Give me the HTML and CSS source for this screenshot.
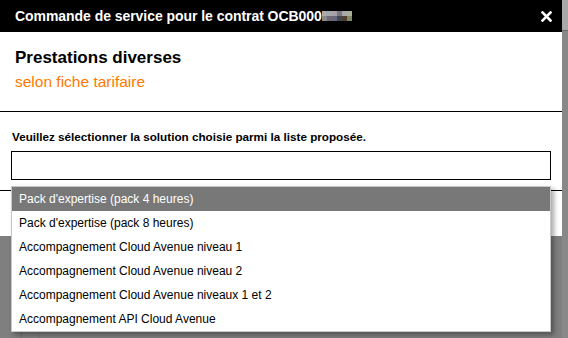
FILE: index.html
```html
<!DOCTYPE html>
<html lang="fr">
<head>
    <meta charset="UTF-8">
    <meta name="viewport" content="width=device-width, initial-scale=1.0">
    <title>Commande de service</title>
    <link rel="stylesheet" href="styles.css">
</head>
<body>
    <div class="page">
        <div class="column">
            <div class="modal">
                <div class="modal-header">
                    <span class="modal-title">Commande de service pour le contrat OCB000<span class="masked"><i style="background:#b0a8a8"></i><i style="background:#a0a8b0"></i><i style="background:#a8a0a8"></i><i style="background:#787880"></i><i style="background:#a8a8a8"></i><i style="background:#a8b098"></i><i style="background:#888888"></i><i style="background:#706878"></i><i style="background:#686878"></i><i style="background:#404858"></i><i style="background:#504030"></i><i style="background:#808868"></i></span></span>
                    <button class="close-btn" aria-label="Fermer">
                        <svg width="11" height="11" viewBox="0 0 11 11"><path d="M1.5 1.5 L9.5 9.5 M9.5 1.5 L1.5 9.5" stroke="#fff" stroke-width="2.6" stroke-linecap="square"/></svg>
                    </button>
                </div>
                <div class="modal-intro">
                    <h2>Prestations diverses</h2>
                    <p class="subtitle">selon fiche tarifaire</p>
                </div>
                <div class="modal-form">
                    <label class="field-label">Veuillez sélectionner la solution choisie parmi la liste proposée.</label>
                    <div class="select-box"></div>
                </div>
                <div class="modal-footer"></div>

                <ul class="dropdown">
                    <li class="active">Pack d'expertise (pack 4 heures)</li>
                    <li>Pack d'expertise (pack 8 heures)</li>
                    <li>Accompagnement Cloud Avenue niveau 1</li>
                    <li>Accompagnement Cloud Avenue niveau 2</li>
                    <li>Accompagnement Cloud Avenue niveaux 1 et 2</li>
                    <li>Accompagnement API Cloud Avenue</li>
                </ul>
            </div>
            <div class="behind">
                <span class="behind-cell"></span>
                <span class="behind-cell"></span>
            </div>
        </div>
        <div class="scroll-strip">
            <span class="scroll-btn"></span>
        </div>
    </div>
</body>
</html>
```

FILE: styles.css
```css
html, body {
    height: 100%;
}
body {
    margin: 0;
    font-family: "Liberation Sans", Arial, sans-serif;
    background-color: #7f7f7f;
}
.page {
    display: flex;
    height: 100%;
}
.column {
    width: 562px;
    display: flex;
    flex-direction: column;
}
.modal {
    background: white;
    position: relative;
}
.modal-header {
    background: #000;
    color: white;
    height: 32px;
    display: flex;
    align-items: center;
    justify-content: space-between;
    padding: 0 10px 0 15px;
}
.modal-title {
    font-size: 14px;
    font-weight: bold;
    display: flex;
    align-items: center;
    letter-spacing: -0.05px;
}
.masked {
    display: grid;
    grid-template-columns: repeat(6, 5px);
    grid-template-rows: 5px 5px;
}
.masked i {
    display: block;
}
.close-btn {
    background: none;
    border: none;
    padding: 0;
    width: 11px;
    height: 11px;
    display: flex;
    cursor: pointer;
}
.modal-intro {
    padding: 15px 15px 20px;
    border-bottom: 1px solid #000;
}
.modal-intro h2 {
    margin: 0;
    font-size: 17px;
    line-height: 22px;
    color: #000;
}
.subtitle {
    margin: 4px 0 0;
    font-size: 15.5px;
    line-height: 18px;
    color: #ff7900;
}
.modal-form {
    padding: 18px 11px 10px;
    border-bottom: 1px solid #000;
}
.field-label {
    display: block;
    font-size: 11.7px;
    font-weight: bold;
    line-height: 14px;
    margin: 0 0 7px 1px;
    color: #000;
}
.select-box {
    height: 27px;
    border: 1px solid #000;
    background: white;
}
.modal-footer {
    height: 45px;
}
.dropdown {
    position: absolute;
    top: 186px;
    left: 11px;
    width: 538px;
    margin: 0;
    padding: 0;
    list-style: none;
    background: white;
    border: 1px solid #c8c8c8;
    box-shadow: 3px 3px 5px rgba(0, 0, 0, 0.35);
    z-index: 2;
}
.dropdown li {
    height: 24px;
    line-height: 24px;
    padding: 0 7px;
    font-size: 12px;
    color: #000;
}
.dropdown li.active {
    background: #787878;
    color: white;
}
.behind {
    margin-top: auto;
    display: flex;
    height: 8px;
    padding-left: 21px;
}
.behind-cell {
    width: 16px;
    border-left: 1px solid #727272;
}
.scroll-strip {
    width: 6px;
    background: #888;
}
.scroll-btn {
    display: block;
    height: 30px;
    background: #a8a8a8;
    border-bottom: 1px solid #6a6a6a;
}
```
